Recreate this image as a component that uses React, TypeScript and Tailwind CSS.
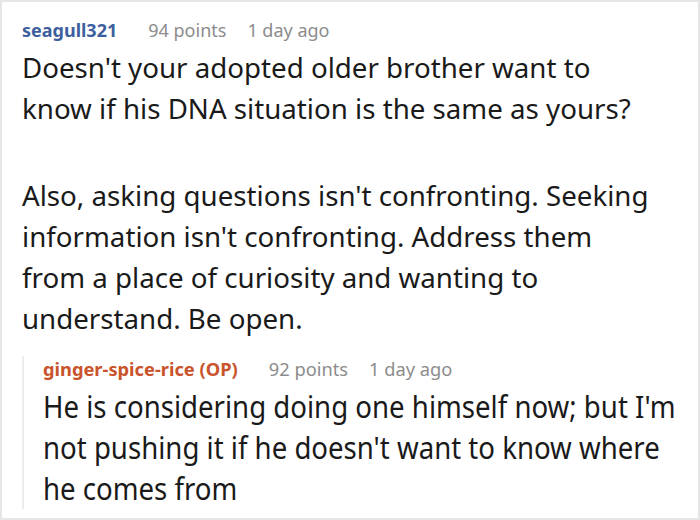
import React from 'react';

const font = { fontFamily: '"Noto Sans", "Open Sans", sans-serif' };

export default function App() {
  return (
    <div className="w-[700px] h-[520px] bg-white border-2 border-[#e6e6e6] overflow-hidden" style={font}>
      <div className="pl-[20px] pt-[15px]">
        {/* top comment */}
        <div className="flex items-baseline text-[18px] leading-[26px]">
          <span className="font-bold text-[#3d5f9e]">seagull321</span>
          <span className="ml-[31px] text-[#8c8c8c]">94 points</span>
          <span className="ml-[21px] text-[#8c8c8c]">1 day ago</span>
        </div>
        <div className="text-[27.7px] leading-[41px] text-[#1a1a1a] w-[632px] mt-[4px]">
          <p>Doesn't your adopted older brother want to know if his DNA situation is the same as yours?</p>
          <p className="mt-[46px]">Also, asking questions isn't confronting. Seeking information isn't confronting. Address them from a place of curiosity and wanting to understand. Be open.</p>
        </div>

        {/* reply */}
        <div className="mt-[17px] border-l-2 border-[#ececec] pl-[19px]">
          <div className="flex items-baseline text-[18.3px] leading-[26px]">
            <span className="font-bold text-[#c9532b]">ginger-spice-rice (OP)</span>
            <span className="ml-[31px] text-[#8c8c8c]">92 points</span>
            <span className="ml-[21px] text-[#8c8c8c]">1 day ago</span>
          </div>
          <p className="text-[30px] leading-[41px] text-[#1a1a1a] w-[700px] mt-[4px] origin-left scale-x-[0.92]">
            He is considering doing one himself now; but I'm not pushing it if he doesn't want to know where he comes from
          </p>
        </div>
      </div>
    </div>
  );
}
